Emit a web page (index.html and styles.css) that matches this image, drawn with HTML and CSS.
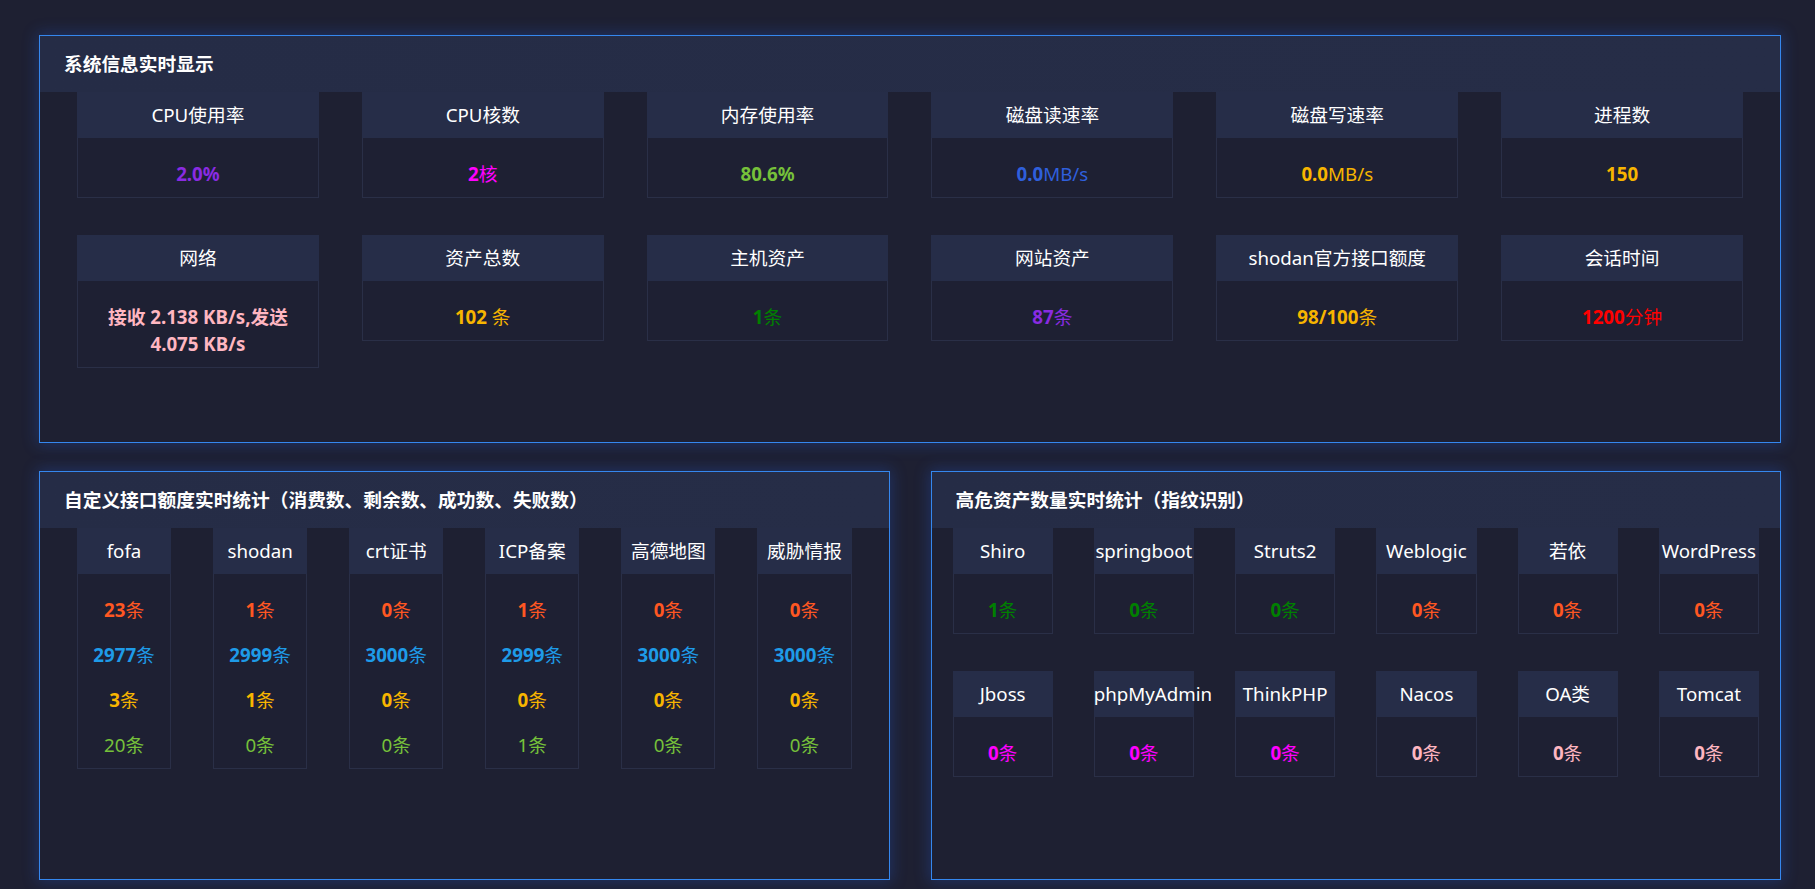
FILE: index.html
```html
<!DOCTYPE html>
<html lang="zh-CN">
<head>
<meta charset="utf-8">
<title>系统信息实时显示</title>
<link rel="stylesheet" href="styles.css">
</head>
<body>
<div class="page">
  <section class="panel panel-top">
    <div class="panel-title">系统信息实时显示</div>
    <div class="grid grid-sys">
      <div class="card"><div class="card-head">CPU使用率</div><div class="card-body"><div class="val c-violet"><b>2.0%</b></div></div></div>
      <div class="card"><div class="card-head">CPU核数</div><div class="card-body"><div class="val c-magenta"><b>2</b>核</div></div></div>
      <div class="card"><div class="card-head">内存使用率</div><div class="card-body"><div class="val c-lime"><b>80.6%</b></div></div></div>
      <div class="card"><div class="card-head">磁盘读速率</div><div class="card-body"><div class="val c-royal"><b>0.0</b>MB/s</div></div></div>
      <div class="card"><div class="card-head">磁盘写速率</div><div class="card-body"><div class="val c-gold"><b>0.0</b>MB/s</div></div></div>
      <div class="card"><div class="card-head">进程数</div><div class="card-body"><div class="val c-gold"><b>150</b></div></div></div>
      <div class="card"><div class="card-head">网络</div><div class="card-body"><div class="val c-pink"><b>接收 2.138 KB/s,发送 4.075 KB/s</b></div></div></div>
      <div class="card"><div class="card-head">资产总数</div><div class="card-body"><div class="val c-gold"><b>102</b> 条</div></div></div>
      <div class="card"><div class="card-head">主机资产</div><div class="card-body"><div class="val c-green"><b>1</b>条</div></div></div>
      <div class="card"><div class="card-head">网站资产</div><div class="card-body"><div class="val c-violet"><b>87</b>条</div></div></div>
      <div class="card"><div class="card-head">shodan官方接口额度</div><div class="card-body"><div class="val c-gold"><b>98/100</b>条</div></div></div>
      <div class="card"><div class="card-head">会话时间</div><div class="card-body"><div class="val c-red"><b>1200</b>分钟</div></div></div>
    </div>
  </section>

  <div class="bottom">
    <section class="panel panel-bottom">
      <div class="panel-title">自定义接口额度实时统计（消费数、剩余数、成功数、失败数）</div>
      <div class="grid grid-api">
        <div class="card"><div class="card-head">fofa</div><div class="card-body">
          <div class="val c-orange"><b>23</b>条</div><div class="val c-blue"><b>2977</b>条</div><div class="val c-gold"><b>3</b>条</div><div class="val c-lime">20条</div>
        </div></div>
        <div class="card"><div class="card-head">shodan</div><div class="card-body">
          <div class="val c-orange"><b>1</b>条</div><div class="val c-blue"><b>2999</b>条</div><div class="val c-gold"><b>1</b>条</div><div class="val c-lime">0条</div>
        </div></div>
        <div class="card"><div class="card-head">crt证书</div><div class="card-body">
          <div class="val c-orange"><b>0</b>条</div><div class="val c-blue"><b>3000</b>条</div><div class="val c-gold"><b>0</b>条</div><div class="val c-lime">0条</div>
        </div></div>
        <div class="card"><div class="card-head">ICP备案</div><div class="card-body">
          <div class="val c-orange"><b>1</b>条</div><div class="val c-blue"><b>2999</b>条</div><div class="val c-gold"><b>0</b>条</div><div class="val c-lime">1条</div>
        </div></div>
        <div class="card"><div class="card-head">高德地图</div><div class="card-body">
          <div class="val c-orange"><b>0</b>条</div><div class="val c-blue"><b>3000</b>条</div><div class="val c-gold"><b>0</b>条</div><div class="val c-lime">0条</div>
        </div></div>
        <div class="card"><div class="card-head">威胁情报</div><div class="card-body">
          <div class="val c-orange"><b>0</b>条</div><div class="val c-blue"><b>3000</b>条</div><div class="val c-gold"><b>0</b>条</div><div class="val c-lime">0条</div>
        </div></div>
      </div>
    </section>

    <section class="panel panel-bottom">
      <div class="panel-title">高危资产数量实时统计（指纹识别）</div>
      <div class="grid grid-risk">
        <div class="card"><div class="card-head">Shiro</div><div class="card-body"><div class="val c-green"><b>1</b>条</div></div></div>
        <div class="card"><div class="card-head">springboot</div><div class="card-body"><div class="val c-green"><b>0</b>条</div></div></div>
        <div class="card"><div class="card-head">Struts2</div><div class="card-body"><div class="val c-green"><b>0</b>条</div></div></div>
        <div class="card"><div class="card-head">Weblogic</div><div class="card-body"><div class="val c-orange"><b>0</b>条</div></div></div>
        <div class="card"><div class="card-head">若依</div><div class="card-body"><div class="val c-orange"><b>0</b>条</div></div></div>
        <div class="card"><div class="card-head">WordPress</div><div class="card-body"><div class="val c-orange"><b>0</b>条</div></div></div>
        <div class="card"><div class="card-head">Jboss</div><div class="card-body"><div class="val c-magenta"><b>0</b>条</div></div></div>
        <div class="card"><div class="card-head">phpMyAdmin</div><div class="card-body"><div class="val c-magenta"><b>0</b>条</div></div></div>
        <div class="card"><div class="card-head">ThinkPHP</div><div class="card-body"><div class="val c-magenta"><b>0</b>条</div></div></div>
        <div class="card"><div class="card-head">Nacos</div><div class="card-body"><div class="val c-pink"><b>0</b>条</div></div></div>
        <div class="card"><div class="card-head">OA类</div><div class="card-body"><div class="val c-pink"><b>0</b>条</div></div></div>
        <div class="card"><div class="card-head">Tomcat</div><div class="card-body"><div class="val c-pink"><b>0</b>条</div></div></div>
      </div>
    </section>
  </div>
</div>
</body>
</html>
```
FILE: styles.css
```css
* { box-sizing: border-box; }

html, body {
  margin: 0;
  height: 100%;
  overflow: hidden;
}

body {
  background: #1e2032;
  color: #ffffff;
  font-family: "Noto Sans", "Noto Sans CJK SC", sans-serif;
  font-size: 18.72px;
}

.page {
  padding: 35px 34px 0 39px;
}

.panel {
  border: 1px solid #3587ee;
  background: #1e2032;
  box-shadow: 0 0 14px 2px rgba(38, 88, 200, 0.32);
}

.panel-top {
  height: 408px;
}

.bottom {
  margin-top: 28px;
  display: grid;
  grid-template-columns: 1fr 1fr;
  column-gap: 41px;
}

.panel-bottom {
  height: 409px;
}

.panel-title {
  height: 56px;
  line-height: 56px;
  padding-left: 24px;
  background: linear-gradient(90deg, #252c46, #262d47);
  font-weight: 700;
  font-size: 18.72px;
  white-space: nowrap;
}

.grid {
  display: grid;
  grid-template-columns: repeat(6, 1fr);
  align-items: start;
  row-gap: 37px;
}

.grid-sys { padding: 0 37px; column-gap: 43px; }
.grid-api { padding: 0 37px; column-gap: 42px; }
.grid-risk { padding: 0 21px; column-gap: 41px; }

.card {
  min-width: 0;
}

.card-head {
  height: 46px;
  line-height: 46px;
  background: #262d48;
  text-align: center;
  white-space: nowrap;
}

.card-body {
  border: 1px solid #2a2f47;
  border-top: none;
  background: #1e2033;
  padding-top: 13px;
  padding-bottom: 1px;
  text-align: center;
}

.val {
  padding: 9px 10px;
  line-height: 27px;
}

.val b { font-weight: 700; }

.c-violet { color: #8a2be2; }
.c-magenta { color: #ff00ff; }
.c-lime { color: #76c13a; }
.c-royal { color: #2f5fdc; }
.c-gold { color: #f7b500; }
.c-pink { color: #ffb6c1; }
.c-green { color: #008000; }
.c-red { color: #ff0000; }
.c-orange { color: #ff5722; }
.c-blue { color: #1e9be8; }
```
